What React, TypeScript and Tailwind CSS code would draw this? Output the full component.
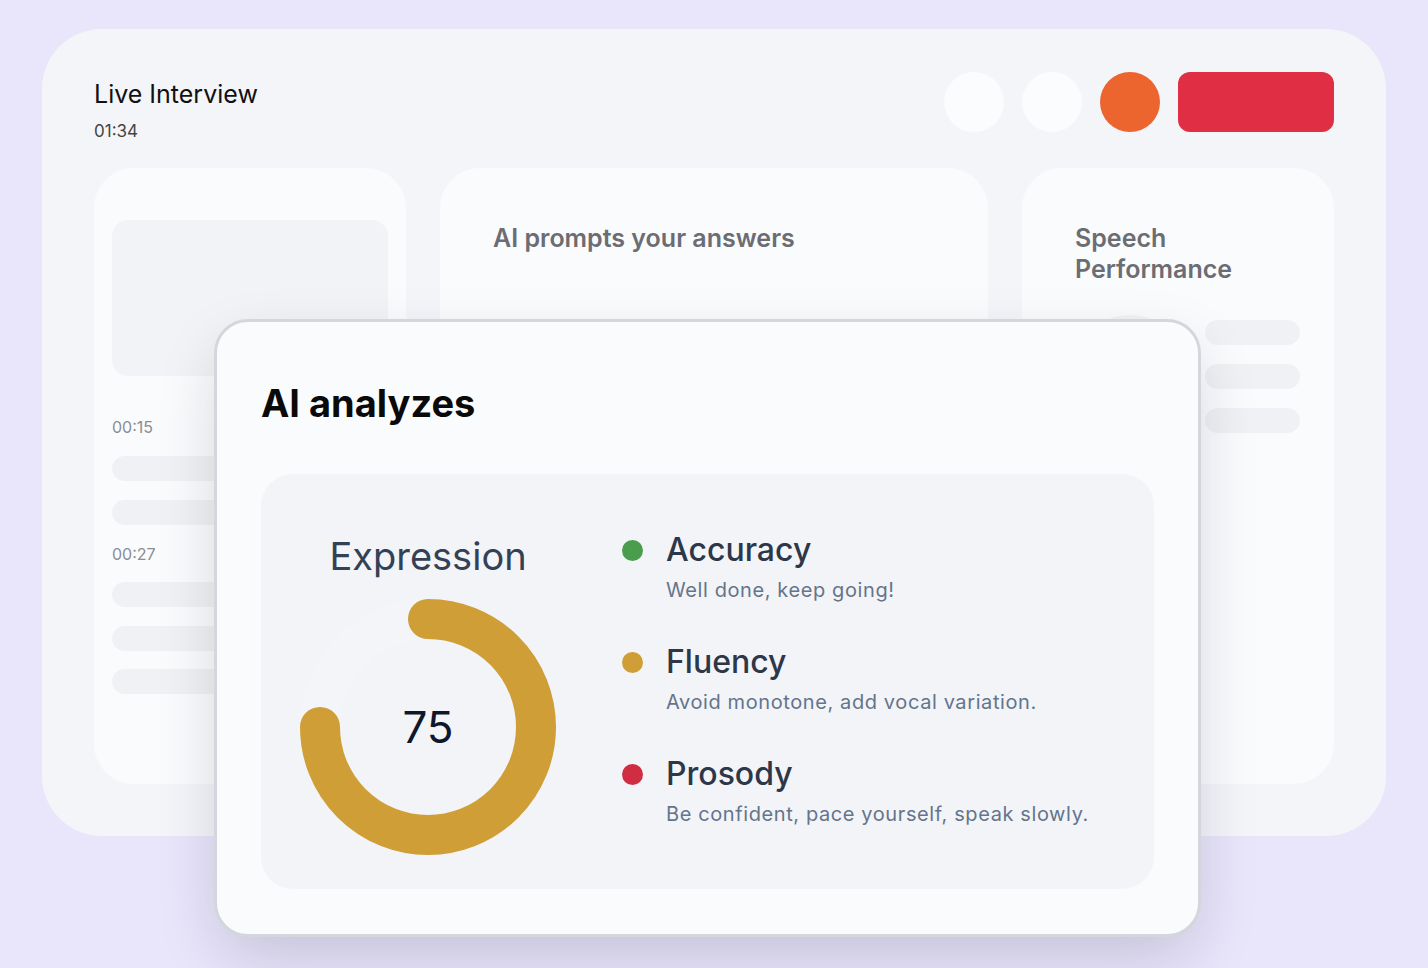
import React from 'react';

const font = { fontFamily: 'Inter, "Noto Sans", sans-serif' };

function Bar({ className = '' }: { className?: string }) {
  return <div className={`h-[25px] rounded-full bg-[#f0f1f4] ${className}`} />;
}

function Metric({ color, title, text, className = '' }: { color: string; title: string; text: string; className?: string }) {
  return (
    <div className={className}>
      <div className="flex items-center gap-[23px]">
        <span className={`h-[21px] w-[21px] rounded-full ${color}`} />
        <span className="text-[32px] leading-[42px] font-medium text-[#2d3748]">{title}</span>
      </div>
      <p className="mt-[5px] pl-[44px] text-[20px] leading-[28px] tracking-[0.03em] text-[#64748b]">{text}</p>
    </div>
  );
}

function Donut({ value }: { value: number }) {
  return (
    <div className="relative h-[256px] w-[256px]">
      <svg width="256" height="256" viewBox="0 0 256 256">
        <circle cx="128" cy="128" r="108" fill="none" stroke="#f3f5f9" strokeWidth="40" />
        <path d="M128 20 A108 108 0 1 1 20 128" fill="none" stroke="#d09e36" strokeWidth="40" strokeLinecap="round" />
      </svg>
      <div className="absolute inset-0 flex items-center justify-center text-[44px] text-[#0f172a]">{value}</div>
    </div>
  );
}

export default function App() {
  return (
    <div className="relative h-[968px] w-full overflow-hidden bg-[#e9e5fb] px-[42px] pt-[29px]" style={font}>
      {/* Background dashboard */}
      <div className="h-[807px] w-[1344px] rounded-[60px] bg-[#f4f5f9] px-[52px] pt-[43px]">
        <div className="flex h-[60px] items-start justify-between">
          <div className="pt-[6px]">
            <h1 className="text-[25px] leading-[32px] text-[#111]">Live Interview</h1>
            <p className="mt-[9px] text-[17px] leading-[24px] text-[#444]">01:34</p>
          </div>
          <div className="flex gap-[18px]">
            <div className="h-[60px] w-[60px] rounded-full bg-[#fbfcfe]" />
            <div className="h-[60px] w-[60px] rounded-full bg-[#fbfcfe]" />
            <div className="h-[60px] w-[60px] rounded-full bg-[#ec652e]" />
            <div className="h-[60px] w-[156px] rounded-[12px] bg-[#e02f44]" />
          </div>
        </div>

        <div className="mt-[36px] grid h-[616px] grid-cols-[312px_1fr_312px] gap-[34px]">
          <div className="rounded-[40px] bg-[#fafbfd] px-[18px] pt-[52px]">
            <div className="h-[156px] rounded-[16px] bg-[#f2f3f6]" />
            <p className="mt-[41px] text-[16px] leading-[20px] text-[#8a8d94]">00:15</p>
            <Bar className="mt-[19px]" />
            <Bar className="mt-[19px]" />
            <p className="mt-[19px] text-[16px] leading-[20px] text-[#8a8d94]">00:27</p>
            <Bar className="mt-[18px]" />
            <Bar className="mt-[19px]" />
            <Bar className="mt-[18px]" />
          </div>

          <div className="rounded-[40px] bg-[#fafbfd] px-[53px] pt-[54px]">
            <h2 className="text-[25px] leading-[32px] font-semibold text-[#6b6d73]">AI prompts your answers</h2>
          </div>

          <div className="rounded-[40px] bg-[#fafbfd] pl-[53px] pr-[34px] pt-[55px]">
            <h2 className="text-[25px] leading-[31px] font-semibold text-[#6b6d73]">
              Speech
              <br />
              Performance
            </h2>
            <div className="mt-[30px] flex items-start justify-between">
              <div className="h-[110px] w-[110px] rounded-full bg-[#f1f2f5]" />
              <div className="flex w-[95px] flex-col gap-[19px] pt-[5px]">
                <Bar />
                <Bar />
                <Bar />
              </div>
            </div>
          </div>
        </div>
      </div>

      {/* Foreground card */}
      <div className="absolute left-[214px] top-[319px] h-[618px] w-[987px] rounded-[34px] border-[3px] border-[#d3d7dd] bg-[#fafbfd] px-[44px] pt-[57px] shadow-[0_24px_64px_-8px_rgba(15,23,42,0.18)]">
        <h2 className="text-[38px] leading-[48px] font-bold text-[#0a0a0a]">AI analyzes</h2>
        <div className="mt-[47px] flex h-[415px] rounded-[32px] bg-[#f2f4f8] pl-[39px]">
          <div className="flex w-[256px] flex-col items-center pt-[59px]">
            <p className="text-[38px] leading-[46px] text-[#334155]">Expression</p>
            <div className="mt-[20px]">
              <Donut value={75} />
            </div>
          </div>
          <div className="ml-[66px] pt-[55px]">
            <Metric color="bg-[#4a9d4c]" title="Accuracy" text="Well done, keep going!" />
            <Metric className="mt-[37px]" color="bg-[#d09e36]" title="Fluency" text="Avoid monotone, add vocal variation." />
            <Metric className="mt-[37px]" color="bg-[#d02d42]" title="Prosody" text="Be confident, pace yourself, speak slowly." />
          </div>
        </div>
      </div>
    </div>
  );
}
